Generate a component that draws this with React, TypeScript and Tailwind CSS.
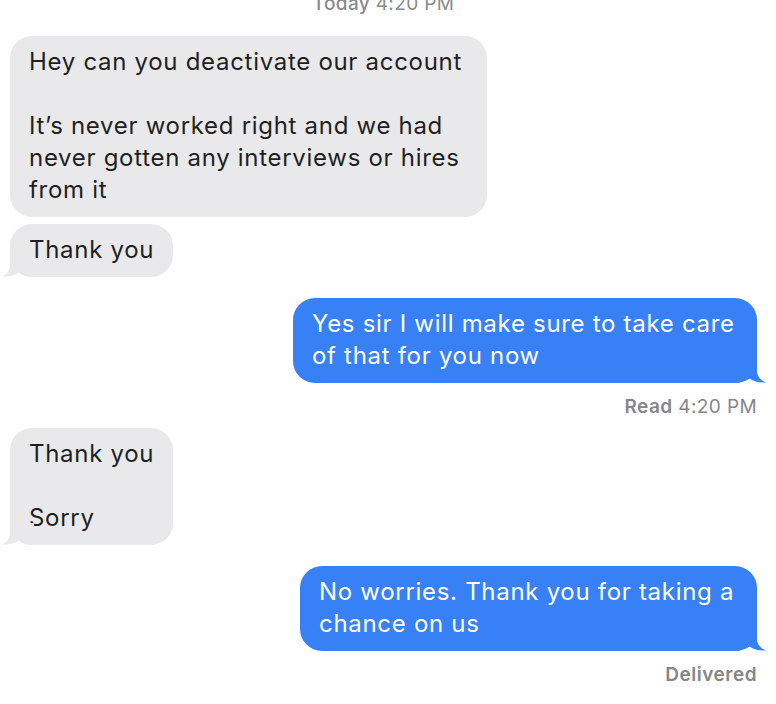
import React from "react";

const FONT = { fontFamily: 'Inter, "Noto Sans", sans-serif' } as React.CSSProperties;

function LeftTail() {
  return (
    <svg
      className="absolute bottom-0 left-[-8px]"
      width="32"
      height="22"
      viewBox="0 0 32 22"
    >
      <path
        d="M8 0 L8 10 C8 16 4.5 19.8 0 21.4 C6 22.2 12 20.6 16.5 17.6 C20.5 20.6 26 22 32 22 L32 0 Z"
        fill="#e9e9eb"
      />
    </svg>
  );
}

function RightTail() {
  return (
    <svg
      className="absolute bottom-0 right-[-9px]"
      width="32"
      height="22"
      viewBox="0 0 32 22"
    >
      <path
        d="M23 0 L23 10 C23 16 27.5 19.8 32 21.4 C26 22.2 20 20.6 15.5 17.6 C11.5 20.6 6 22 0 22 L0 0 Z"
        fill="#3880f6"
      />
    </svg>
  );
}

function Gray({ lines, w, tail }: { lines: string[]; w?: string; tail?: boolean }) {
  return (
    <div
      className={`relative self-start rounded-[22px] bg-[#e9e9eb] pl-[19px] pr-[19px] pt-[10px] pb-[11px] text-[24px] leading-[32px] tracking-[0.7px] text-[#1f1f21] ${w ?? ""}`}
    >
      {lines.map((l, i) => (
        <div key={i} className="h-[32px] whitespace-nowrap">
          {l}
        </div>
      ))}
      {tail && <LeftTail />}
    </div>
  );
}

function Blue({ lines, w }: { lines: string[]; w: string }) {
  return (
    <div
      className={`relative self-end rounded-[22px] bg-[#3880f6] pl-[19px] pt-[10px] pb-[11px] text-[24px] leading-[32px] tracking-[0.7px] text-white ${w}`}
    >
      {lines.map((l, i) => (
        <div key={i} className="h-[32px] whitespace-nowrap">
          {l}
        </div>
      ))}
      <RightTail />
    </div>
  );
}

export default function App() {
  return (
    <div className="h-[704px] w-[776px] overflow-hidden bg-white" style={FONT}>
      <div className="flex flex-col pl-[10px] pr-[19px]">
        <div className="mt-[-7px] h-[22px] text-center text-[19px] leading-[22px] tracking-[0.4px] font-medium text-[#8a8a8e]">
          Today <span className="font-normal">4:20 PM</span>
        </div>
        <div className="mt-[21px]">
          <Gray
            w="w-[477px]"
            lines={[
              "Hey can you deactivate our account",
              "",
              "It\u2019s never worked right and we had",
              "never gotten any interviews or hires",
              "from it",
            ]}
          />
        </div>
        <div className="mt-[7px] flex flex-col">
          <Gray lines={["Thank you"]} tail />
        </div>
        <div className="mt-[21px] flex flex-col">
          <Blue
            w="w-[464px]"
            lines={["Yes sir I will make sure to take care", "of that for you now"]}
          />
        </div>
        <div className="mt-[13px] h-[22px] text-right text-[19px] leading-[22px] tracking-[0.4px] text-[#86868b]">
          <span className="font-semibold">Read</span> 4:20 PM
        </div>
        <div className="mt-[10px] flex flex-col">
          <Gray lines={["Thank you", "", "Sorry"]} tail />
        </div>
        <div className="mt-[21px] flex flex-col">
          <Blue
            w="w-[457px]"
            lines={["No worries. Thank you for taking a", "chance on us"]}
          />
        </div>
        <div className="mt-[13px] h-[22px] text-right text-[19px] leading-[22px] tracking-[0.5px] font-semibold text-[#86868b]">
          Delivered
        </div>
      </div>
    </div>
  );
}
